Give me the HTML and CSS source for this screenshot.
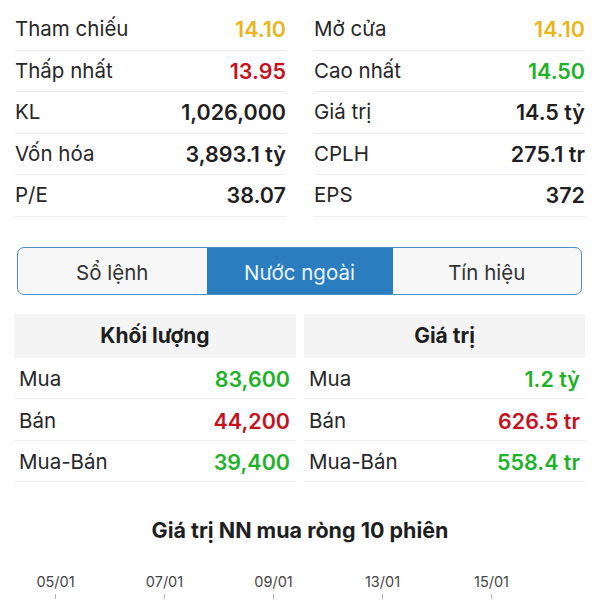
FILE: index.html
```html
<!DOCTYPE html>
<html lang="vi">
<head>
<meta charset="utf-8">
<link rel="stylesheet" href="styles.css">
</head>
<body>
<div class="stats">
  <div class="col">
    <div class="row"><span class="lbl">Tham chiếu</span><span class="val yellow">14.10</span></div>
    <div class="row"><span class="lbl">Thấp nhất</span><span class="val red">13.95</span></div>
    <div class="row"><span class="lbl">KL</span><span class="val">1,026,000</span></div>
    <div class="row"><span class="lbl">Vốn hóa</span><span class="val">3,893.1 tỷ</span></div>
    <div class="row"><span class="lbl">P/E</span><span class="val">38.07</span></div>
  </div>
  <div class="col">
    <div class="row"><span class="lbl">Mở cửa</span><span class="val yellow">14.10</span></div>
    <div class="row"><span class="lbl">Cao nhất</span><span class="val green">14.50</span></div>
    <div class="row"><span class="lbl">Giá trị</span><span class="val">14.5 tỷ</span></div>
    <div class="row"><span class="lbl">CPLH</span><span class="val">275.1 tr</span></div>
    <div class="row"><span class="lbl">EPS</span><span class="val">372</span></div>
  </div>
</div>

<div class="tabs">
  <div class="tab">Sổ lệnh</div>
  <div class="tab active">Nước ngoài</div>
  <div class="tab">Tín hiệu</div>
</div>

<div class="foreign">
  <div class="table">
    <div class="thead">Khối lượng</div>
    <div class="trow"><span class="lbl">Mua</span><span class="val green">83,600</span></div>
    <div class="trow"><span class="lbl">Bán</span><span class="val red">44,200</span></div>
    <div class="trow"><span class="lbl">Mua-Bán</span><span class="val green">39,400</span></div>
  </div>
  <div class="table">
    <div class="thead">Giá trị</div>
    <div class="trow"><span class="lbl">Mua</span><span class="val green">1.2 tỷ</span></div>
    <div class="trow"><span class="lbl">Bán</span><span class="val red">626.5 tr</span></div>
    <div class="trow"><span class="lbl">Mua-Bán</span><span class="val green">558.4 tr</span></div>
  </div>
</div>

<div class="chart-title">Giá trị NN mua ròng 10 phiên</div>

<div class="axis">
  <div class="tick"><span>05/01</span><i></i></div>
  <div class="tick"><span>07/01</span><i></i></div>
  <div class="tick"><span>09/01</span><i></i></div>
  <div class="tick"><span>13/01</span><i></i></div>
  <div class="tick"><span>15/01</span><i></i></div>
</div>
</body>
</html>
```

FILE: styles.css
```css
* { box-sizing: border-box; }
html, body { margin: 0; padding: 0; background: #fff; }
body {
  font-family: Inter, "Noto Sans", "DejaVu Sans", sans-serif;
  color: #222;
  width: 600px;
  height: 600px;
  overflow: hidden;
}

.stats {
  display: grid;
  grid-template-columns: 271px 271px;
  column-gap: 28px;
  padding: 9px 0 0 15px;
}
.row {
  height: 41.5px;
  border-bottom: 1px solid #ededed;
  display: flex;
  align-items: center;
  justify-content: space-between;
  font-size: 20.5px;
  line-height: 24px;
}
.lbl { font-weight: 400; color: #262626; font-size: 20.5px; }
.val { font-weight: 600; color: #1f1f1f; font-size: 21.5px; }
.yellow { color: #e8b51c; }
.red { color: #c4121f; }
.green { color: #1fb12a; }

.tabs {
  display: flex;
  margin: 30px 0 0 17px;
  width: 565px;
  height: 48px;
  border: 1px solid #4f8cc4;
  border-radius: 7px;
  overflow: hidden;
  background: #f7f7f7;
}
.tab {
  flex: 1;
  display: flex;
  align-items: center;
  justify-content: center;
  padding-top: 4px;
  font-size: 20.5px;
  color: #333;
}
.tab.active {
  flex: 0 0 186px;
  background: #2a7dbf;
  color: #eaf4fc;
}

.foreign {
  display: flex;
  gap: 8px;
  margin: 19px 0 0 14px;
}
.table { width: 282px; }
.table + .table { width: 281px; }
.thead {
  height: 44px;
  background: #f4f4f4;
  display: flex;
  align-items: center;
  justify-content: center;
  font-weight: 700;
  font-size: 21px;
  color: #1e1e1e;
}
.trow {
  height: 41.5px;
  border-bottom: 1px solid #ededed;
  display: flex;
  align-items: center;
  justify-content: space-between;
  padding: 3px 6px 0 5px;
  line-height: 24px;
}
.table + .table .trow { padding-right: 5px; }

.chart-title {
  margin-top: 35px;
  height: 26px;
  line-height: 26px;
  text-align: center;
  font-weight: 700;
  font-size: 21.5px;
  color: #1e1e1e;
}

.axis {
  display: flex;
  padding-left: 1px;
  margin-top: 30px;
}
.tick {
  width: 109px;
  display: flex;
  flex-direction: column;
  align-items: center;
  font-size: 14.5px;
  line-height: 17px;
  color: #444;
}
.tick i {
  display: block;
  width: 1px;
  height: 5px;
  background: #b5b5b5;
  margin-top: 4px;
}
```
